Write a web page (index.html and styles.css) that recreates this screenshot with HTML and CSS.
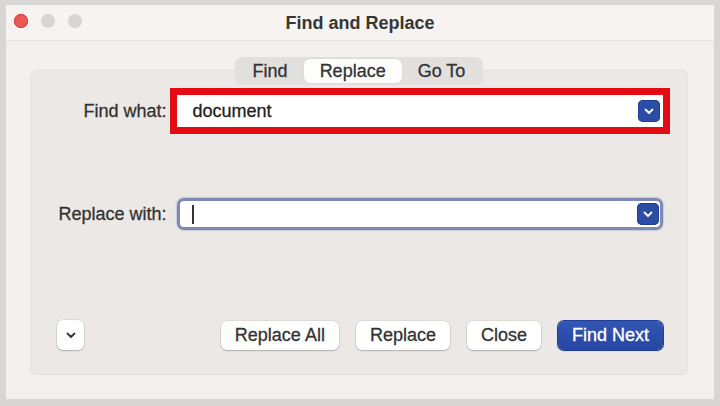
FILE: index.html
```html
<!DOCTYPE html>
<html>
<head>
<meta charset="utf-8">
<link rel="stylesheet" href="styles.css">
</head>
<body>
<div class="window">
  <div class="titlebar">
    <div class="lights">
      <span class="light red"></span>
      <span class="light gray"></span>
      <span class="light gray"></span>
    </div>
    <div class="title">Find and Replace</div>
  </div>
  <div class="content">
    <div class="tabs">
      <span class="tab">Find</span>
      <span class="tab active">Replace</span>
      <span class="tab">Go To</span>
    </div>
    <div class="panel">
      <div class="row">
        <label class="label">Find what:</label>
        <div class="field highlighted">
          <span class="value">document</span>
          <span class="drop"><svg width="10" height="7" viewBox="0 0 10 7"><path d="M1.5 1.5 L5 5 L8.5 1.5" fill="none" stroke="#fff" stroke-width="1.8" stroke-linecap="round" stroke-linejoin="round"/></svg></span>
        </div>
      </div>
      <div class="row row2">
        <label class="label">Replace with:</label>
        <div class="field focused">
          <span class="caret"></span>
          <span class="drop"><svg width="10" height="7" viewBox="0 0 10 7"><path d="M1.5 1.5 L5 5 L8.5 1.5" fill="none" stroke="#fff" stroke-width="1.8" stroke-linecap="round" stroke-linejoin="round"/></svg></span>
        </div>
      </div>
      <div class="buttons">
        <button class="btn disclosure"><svg width="10" height="7" viewBox="0 0 10 7"><path d="M1.5 1.5 L5 5 L8.5 1.5" fill="none" stroke="#333" stroke-width="1.8" stroke-linecap="round" stroke-linejoin="round"/></svg></button>
        <div class="spacer"></div>
        <button class="btn">Replace All</button>
        <button class="btn">Replace</button>
        <button class="btn">Close</button>
        <button class="btn primary">Find Next</button>
      </div>
    </div>
  </div>
</div>
</body>
</html>
```
FILE: styles.css
```css
html, body {
  margin: 0;
  padding: 0;
}
body {
  width: 720px;
  height: 406px;
  background: #d9d7d5;
  font-family: "Liberation Sans", Arial, sans-serif;
  color: #333;
  overflow: hidden;
  -webkit-text-stroke: 0.3px currentColor;
}
.window {
  margin: 5px 6px 0 6px;
  width: 708px;
  height: 394px;
  background: #f3f0ed;
  display: flex;
  flex-direction: column;
}
.titlebar {
  height: 35px;
  border-bottom: 1px solid #e3e0dd;
  background: #f6f3f0;
  position: relative;
  display: flex;
  align-items: center;
  justify-content: center;
}
.lights {
  position: absolute;
  left: 8px;
  top: 9px;
  display: flex;
  gap: 13px;
}
.light {
  width: 14px;
  height: 14px;
  border-radius: 50%;
  background: #d8d6d4;
}
.light.red {
  background: #ec5a55;
  box-shadow: inset 0 0 0 1px #d5403c;
}
.title {
  font-size: 18px;
  font-weight: bold;
  color: #363636;
  margin-top: 1px;
  -webkit-text-stroke: 0;
}
.content {
  flex: 1;
  padding: 16px 26px 24px 24px;
  display: flex;
  flex-direction: column;
}
.tabs {
  align-self: center;
  display: flex;
  padding: 2px;
  background: #e2e0dd;
  border-radius: 7px;
  margin-bottom: -15px;
  position: relative;
  z-index: 1;
}
.tab {
  font-size: 18px;
  line-height: 24px;
  padding: 0 16px;
  border-radius: 6px;
  color: #333;
}
.tab.active {
  background: #fdfdfc;
  box-shadow: 0 0 1px rgba(0,0,0,0.15);
}
.panel {
  flex: 1;
  background: #ebe8e5;
  border: 1px solid #e4e1de;
  border-radius: 6px;
  padding: 24px 24px 24px 26px;
  display: flex;
  flex-direction: column;
}
.row {
  display: flex;
  align-items: center;
}
.row2 {
  margin-top: 71px;
}
.label {
  width: 136px;
  text-align: right;
  font-size: 18px;
  margin-right: 10px;
  margin-left: -26px;
}
.field {
  width: 488px;
  height: 32px;
  background: #fff;
  box-sizing: border-box;
  display: flex;
  align-items: center;
  padding: 0 3px 0 16px;
  font-size: 18px;
  color: #222;
}
.field.highlighted {
  outline: 7px solid #e40c14;
}
.field.focused {
  border: 3px solid #7f89b6;
  border-radius: 7px;
  padding-left: 12px;
  padding-right: 1px;
  box-shadow: 0 0 1px 1px rgba(127,137,182,0.3);
}
.value {
  flex: 1;
}
.caret {
  width: 2px;
  height: 19px;
  background: #333;
  margin-right: auto;
}
.drop {
  width: 22px;
  height: 22px;
  border-radius: 5px;
  background: #2c4da6;
  display: flex;
  align-items: center;
  justify-content: center;
  box-shadow: inset 0 0 0 1px #203d94;
}
.buttons {
  margin-top: auto;
  display: flex;
  align-items: center;
  gap: 17px;
}
.spacer {
  flex: 1;
}
.btn {
  font-family: "Liberation Sans", Arial, sans-serif;
  font-size: 18px;
  color: #333;
  height: 29px;
  padding: 0 14px;
  background: #fff;
  border: none;
  border-radius: 6px;
  box-shadow: 0 0 0 0.5px rgba(0,0,0,0.12), 0 1px 1.5px rgba(0,0,0,0.2);
  -webkit-text-stroke: 0.3px currentColor;
}
.btn.disclosure {
  width: 27px;
  height: 30px;
  padding: 0;
  display: flex;
  align-items: center;
  justify-content: center;
}
.btn.primary {
  background: linear-gradient(#3356b4, #2546a2);
  color: #fff;
  box-shadow: 0 0 0 1px #1f3f99, 0 1px 1.5px rgba(0,0,0,0.2);
}
```
